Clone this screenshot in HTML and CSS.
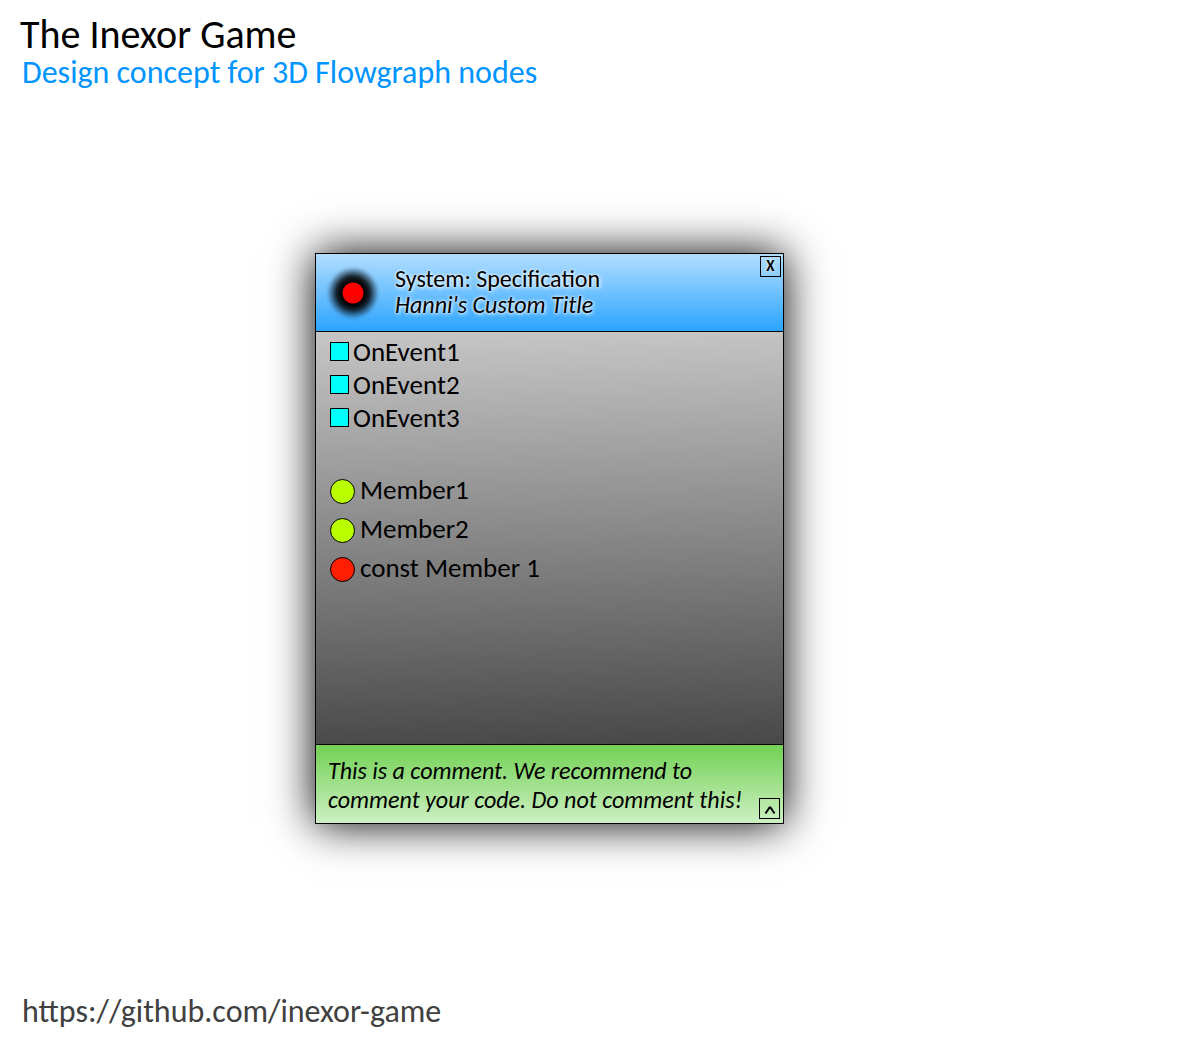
FILE: index.html
```html
<!DOCTYPE html>
<html lang="en">
<head>
<meta charset="utf-8">
<meta name="viewport" content="width=device-width, initial-scale=1">
<title>The Inexor Game</title>
<link rel="stylesheet" href="styles.css">
</head>
<body>
<header class="page-header">
  <h1 class="page-title">The Inexor Game</h1>
  <p class="page-subtitle">Design concept for 3D Flowgraph nodes</p>
</header>
<main class="canvas">
  <article class="node">
    <header class="node-header">
      <svg class="node-icon" viewBox="0 0 56 56" aria-hidden="true">
        <defs>
          <radialGradient id="glow">
            <stop offset="0" stop-color="#000"/>
            <stop offset="0.46" stop-color="#000" stop-opacity="0.96"/>
            <stop offset="0.6" stop-color="#000" stop-opacity="0.8"/>
            <stop offset="0.76" stop-color="#000" stop-opacity="0.4"/>
            <stop offset="0.9" stop-color="#000" stop-opacity="0.08"/>
            <stop offset="1" stop-color="#000" stop-opacity="0"/>
          </radialGradient>
        </defs>
        <circle cx="28" cy="28" r="28" fill="url(#glow)"/>
        <circle cx="28" cy="28" r="10.5" fill="#f00"/>
      </svg>
      <div class="node-titles">
        <h2 class="node-title">System: Specification</h2>
        <p class="node-custom-title">Hanni's Custom Title</p>
      </div>
      <button class="node-button node-close" type="button" aria-label="Close">X</button>
    </header>
    <div class="node-body">
      <ul class="pins events">
        <li class="pin"><span class="socket"></span>OnEvent1</li>
        <li class="pin"><span class="socket"></span>OnEvent2</li>
        <li class="pin"><span class="socket"></span>OnEvent3</li>
      </ul>
      <ul class="pins members">
        <li class="pin"><span class="socket"></span>Member1</li>
        <li class="pin"><span class="socket"></span>Member2</li>
        <li class="pin"><span class="socket socket-const"></span>const Member 1</li>
      </ul>
    </div>
    <footer class="node-footer">
      <p class="node-comment">This is a comment. We recommend to<br>comment your code. Do not comment this!</p>
      <button class="node-button node-collapse" type="button" aria-label="Collapse comment">
        <svg class="chevron" viewBox="0 0 12 10" aria-hidden="true"><path d="M1.500 8.500 5.500 2.500H6.500L10.500 8.500" fill="none" stroke="#000" stroke-width="2"/></svg>
      </button>
    </footer>
  </article>
</main>
<footer class="page-footer">
  <a class="page-link" href="https://github.com/inexor-game">https://github.com/inexor-game</a>
</footer>
</body>
</html>
```
FILE: styles.css
```css
* {
  box-sizing: border-box;
}

body {
  display: flex;
  flex-direction: column;
  min-height: 100vh;
  margin: 0;
  background: #fff;
  color: #000;
  font-family: Calibri, Carlito, Lato, sans-serif;
}

h1, h2, p, ul {
  margin: 0;
  padding: 0;
  font-weight: 400;
}

.page-header {
  padding: 15px 20px 0;
}

.page-title {
  font-size: 40px;
  line-height: 40px;
}

.page-subtitle {
  padding-left: 2px;
  color: #0094ff;
  font-size: 32px;
  line-height: 36px;
}

.canvas {
  flex: 1;
  padding: 162px 20px 48px 315px;
}

.node {
  width: 100%;
  max-width: 469px;
  border: 1px solid #000;
  box-shadow: 0 0 42px #000;
}

.node-header {
  position: relative;
  display: flex;
  align-items: center;
  gap: 14px;
  height: 78px;
  padding-left: 9px;
  border-bottom: 1px solid #000;
  background: linear-gradient(#b2deff, #2ba4ff);
}

.node-icon {
  width: 56px;
  height: 56px;
}

.node-titles {
  padding-bottom: 2px;
  font-size: 24px;
  line-height: 26px;
  text-shadow: 0 0 3px #fff, 1px 1px 4px #fff;
}

.node-title {
  font-size: 24px;
}

.node-custom-title {
  font-style: italic;
}

.node-button {
  position: absolute;
  display: grid;
  place-items: center;
  width: 21px;
  height: 21px;
  padding: 0;
  border: 1px solid #000;
  background: none;
  color: #000;
  font-family: inherit;
  font-size: 15px;
  font-weight: 700;
  line-height: 19px;
}

.node-close {
  top: 2px;
  right: 2px;
  text-shadow: 0 0 3px #fff;
}

.node-collapse {
  right: 3px;
  bottom: 4px;
  align-items: end;
}

.chevron {
  width: 12px;
  height: 10px;
  margin-bottom: 3px;
}

.node-body {
  display: flex;
  flex-direction: column;
  gap: 38px;
  min-height: 412px;
  padding: 3px 14px;
  background: linear-gradient(179deg, #c6c6c6, #484848);
}

.pins {
  list-style: none;
  font-size: 27px;
  line-height: 32px;
}

.pin {
  display: flex;
  align-items: center;
}

.socket {
  flex: none;
  border: 1px solid #000;
}

.events .pin {
  gap: 4px;
  height: 33px;
}

.events .socket {
  width: 19px;
  height: 19px;
  background: #00fffc;
}

.members .pin {
  align-items: flex-start;
  gap: 5px;
  height: 39px;
  padding-top: 2px;
}

.members .socket {
  width: 25px;
  height: 25px;
  margin-top: 5px;
  border-radius: 50%;
  background: #b9ff00;
}

.members .socket-const {
  background: #ff1e00;
}

.node-footer {
  position: relative;
  padding: 11px 12px 9px;
  border-top: 1px solid #000;
  background: linear-gradient(#72d153, #cdf0c3);
}

.node-comment {
  font-size: 24px;
  font-style: italic;
  line-height: 29px;
}

.page-footer {
  padding: 0 22px 14px;
}

.page-link {
  color: #404040;
  font-size: 32px;
  line-height: 36px;
  text-decoration: none;
}
```
